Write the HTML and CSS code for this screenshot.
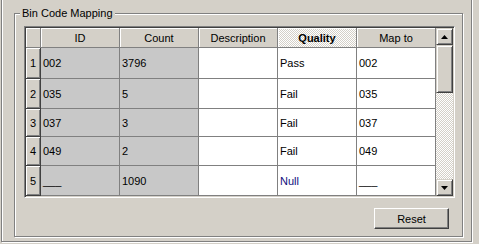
FILE: index.html
```html
<!DOCTYPE html>
<html>
<head>
    <link rel="stylesheet" href="styles.css">
</head>
<body>
    <div class="frame">
        <div class="group">
            <span class="group-title">Bin Code Mapping</span>

            <div class="grid">
                <div class="grid-body">
                    <div class="hdr corner"></div>
                    <div class="hdr">ID</div>
                    <div class="hdr">Count</div>
                    <div class="hdr">Description</div>
                    <div class="hdr sorted">Quality</div>
                    <div class="hdr">Map to</div>

                    <div class="rowhdr">1</div>
                    <div class="cell ro">002</div>
                    <div class="cell ro">3796</div>
                    <div class="cell"></div>
                    <div class="cell">Pass</div>
                    <div class="cell">002</div>

                    <div class="rowhdr">2</div>
                    <div class="cell ro">035</div>
                    <div class="cell ro">5</div>
                    <div class="cell"></div>
                    <div class="cell">Fail</div>
                    <div class="cell">035</div>

                    <div class="rowhdr">3</div>
                    <div class="cell ro">037</div>
                    <div class="cell ro">3</div>
                    <div class="cell"></div>
                    <div class="cell">Fail</div>
                    <div class="cell">037</div>

                    <div class="rowhdr">4</div>
                    <div class="cell ro">049</div>
                    <div class="cell ro">2</div>
                    <div class="cell"></div>
                    <div class="cell">Fail</div>
                    <div class="cell">049</div>

                    <div class="rowhdr">5</div>
                    <div class="cell ro">___</div>
                    <div class="cell ro">1090</div>
                    <div class="cell"></div>
                    <div class="cell null">Null</div>
                    <div class="cell">___</div>
                </div>

                <div class="vscroll">
                    <div class="sb-btn">
                        <svg width="7" height="4" viewBox="0 0 7 4"><polygon points="3.5,0 7,4 0,4" fill="#000"/></svg>
                    </div>
                    <div class="sb-thumb"></div>
                    <div class="sb-track"></div>
                    <div class="sb-btn">
                        <svg width="7" height="4" viewBox="0 0 7 4"><polygon points="0,0 7,0 3.5,4" fill="#000"/></svg>
                    </div>
                </div>
            </div>

            <div class="actions">
                <button class="btn">Reset</button>
            </div>
        </div>
    </div>
</body>
</html>
```

FILE: styles.css
```css
* {
    box-sizing: border-box;
}
html, body {
    margin: 0;
}
body {
    width: 479px;
    height: 244px;
    overflow: hidden;
    background-color: #d4d0c8;
    font-family: "Liberation Sans", Arial, sans-serif;
    font-size: 11px;
    color: #000;
}
/* outer etched frame, its top edge is off screen */
.frame {
    width: 471px;
    height: 262px;
    margin: -20px 0 0 1px;
    padding: 32px 0 0 12px;
    border: 1px solid #808080;
    box-shadow: inset 1px 1px #fff, 1px 1px #fff;
}
.group {
    position: relative;
    width: 449px;
    height: 224px;
    padding: 12px 13px 0 9px;
    border: 1px solid #808080;
    box-shadow: inset 1px 1px #fff, 1px 1px #fff;
}
.group-title {
    position: absolute;
    left: 5px;
    top: -7px;
    padding: 0 2px;
    line-height: 13px;
    background-color: #d4d0c8;
}
.grid {
    display: flex;
    width: 431px;
    height: 172px;
    padding: 1px;
    border: 1px solid;
    border-color: #808080 #fff #fff #808080;
    box-shadow: inset 1px 1px #404040, inset -1px -1px #d4d0c8;
    background-color: #fff;
}
.grid-body {
    display: grid;
    grid-template-columns: 15px repeat(5, 79px);
    grid-template-rows: 20px 31px 30px 28px 29px 30px;
    overflow: hidden;
}
.hdr {
    display: flex;
    align-items: center;
    justify-content: center;
    background-color: #d4d0c8;
    border-right: 1px solid #808080;
    border-bottom: 1px solid #808080;
    box-shadow: inset 1px 1px #fff;
}
.hdr.sorted {
    font-weight: bold;
    background: repeating-conic-gradient(#fff 0 25%, #d4d0c8 0 50%) 0 0 / 2px 2px;
}
.rowhdr {
    display: flex;
    align-items: center;
    justify-content: center;
    background-color: #d4d0c8;
    border-right: 1px solid #404040;
    border-bottom: 1px solid #404040;
    box-shadow: inset 1px 1px #fff, inset -1px -1px #808080;
}
.cell {
    display: flex;
    align-items: center;
    padding-left: 2px;
    background-color: #fff;
    border-right: 1px solid #808080;
    border-bottom: 1px solid #808080;
    white-space: nowrap;
}
.cell.ro {
    background-color: #c8c8c8;
}
.cell.null {
    color: #101080;
}
.vscroll {
    width: 17px;
    display: flex;
    flex-direction: column;
}
.sb-btn, .sb-thumb {
    background-color: #d4d0c8;
    border: 1px solid;
    border-color: #d4d0c8 #404040 #404040 #d4d0c8;
    box-shadow: inset 1px 1px #fff, inset -1px -1px #808080;
}
.sb-btn {
    height: 17px;
    display: flex;
    align-items: center;
    justify-content: center;
}
.sb-btn svg {
    display: block;
}
.sb-thumb {
    height: 48px;
}
.sb-track {
    flex: 1;
    background: repeating-conic-gradient(#fff 0 25%, #d4d0c8 0 50%) 0 0 / 2px 2px;
}
.actions {
    display: flex;
    justify-content: flex-end;
    margin-top: 10px;
}
.btn {
    width: 75px;
    height: 21px;
    padding: 0;
    font: inherit;
    color: #000;
    background-color: #d4d0c8;
    border: 1px solid;
    border-color: #fff #404040 #404040 #fff;
    box-shadow: inset -1px -1px #808080;
}
```
